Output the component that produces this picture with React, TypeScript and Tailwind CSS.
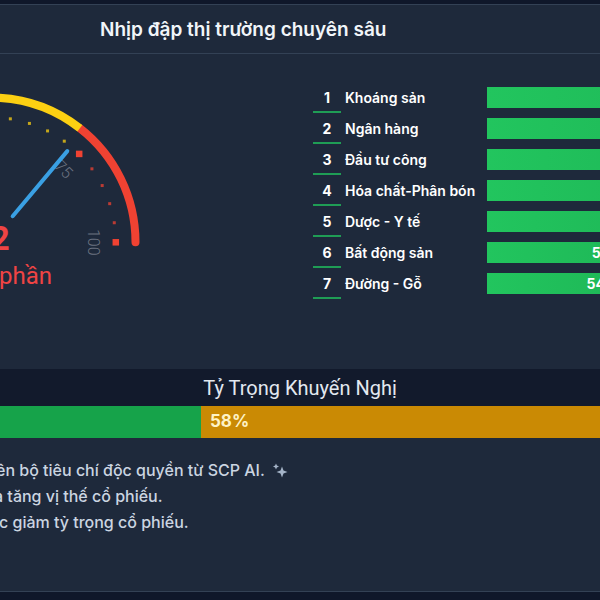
import React from "react";

const CX = -9.2;
const CY = 242.3;

function pt(a: number, r: number): [number, number] {
  const t = (a * Math.PI) / 180;
  return [CX + r * Math.cos(t), CY - r * Math.sin(t)];
}

function arc(a1: number, a2: number, r: number) {
  const [x1, y1] = pt(a1, r);
  const [x2, y2] = pt(a2, r);
  return `M${x1} ${y1} A${r} ${r} 0 ${a1 - a2 > 180 ? 1 : 0} 1 ${x2} ${y2}`;
}

function colorFor(a: number) {
  if (a <= 52) return "#f04232";
  if (a <= 126) return "#fcd012";
  return "#22c55e";
}

function Gauge() {
  const R = 144.7;
  const ticks = [] as React.ReactNode[];
  for (let i = 0; i <= 20; i++) {
    const a = 180 - i * 9;
    const major = i % 5 === 0;
    const [x, y] = pt(a, 125);
    const s = major ? 6.5 : 3;
    ticks.push(
      <rect
        key={i}
        x={x - s / 2}
        y={y - s / 2}
        width={s}
        height={s}
        fill={colorFor(a)}
        opacity={major ? 1 : 0.75}
      />
    );
  }
  const labels = [0, 25, 50, 75, 100].map((v) => {
    const a = 180 - v * 1.8;
    const [x, y] = pt(a, 103);
    return (
      <text
        key={v}
        x={x}
        y={y}
        fill="#6b7280"
        fontSize={16}
        fontFamily="Roboto, sans-serif"
        fontWeight={300}
        textAnchor="middle"
        dominantBaseline="central"
        transform={`rotate(${90 - a} ${x} ${y})`}
      >
        {v}
      </text>
    );
  });
  const [n1x, n1y] = pt(50, 34);
  const [n2x, n2y] = pt(50, 119);
  return (
    <svg width={312} height={315} viewBox="0 54 312 315" className="flex-none block">
      <path d={arc(180, 126, R)} stroke="#22c55e" strokeWidth={8} fill="none" strokeLinecap="round" />
      <path d={arc(52, 0, R)} stroke="#f04232" strokeWidth={8} fill="none" strokeLinecap="round" />
      <path d={arc(126, 52, R)} stroke="#fcd012" strokeWidth={8} fill="none" />
      {ticks}
      {labels}
      <line x1={n1x} y1={n1y} x2={n2x} y2={n2y} stroke="#3aa0e4" strokeWidth={4} strokeLinecap="round" />
      <text
        x={CX}
        y={250}
        fill="#ef4444"
        fontSize={33}
        fontWeight={700}
        fontFamily="Roboto, sans-serif"
        textAnchor="middle"
      >
        72
      </text>
      <text
        x={52}
        y={284}
        fill="#ef4444"
        fontSize={24}
        fontFamily="Roboto, sans-serif"
        textAnchor="end"
      >
        Tăng tỷ phần
      </text>
    </svg>
  );
}

const rows = [
  { n: 1, name: "Khoáng sản", w: 260, v: "78.4%" },
  { n: 2, name: "Ngân hàng", w: 240, v: "72.1%" },
  { n: 3, name: "Đầu tư công", w: 225, v: "68.9%" },
  { n: 4, name: "Hóa chất-Phân bón", w: 205, v: "64.3%" },
  { n: 5, name: "Dược - Y tế", w: 185, v: "60.7%" },
  { n: 6, name: "Bất động sản", w: 158, v: "55.8%" },
  { n: 7, name: "Đường - Gỗ", w: 153, v: "54.6%" },
];

function Sparkle() {
  return (
    <svg width="16" height="15" viewBox="0 0 16 15" className="inline-block ml-[7px] -mt-[2px] align-middle">
      <path d="M10 3.5 L11.5 7.5 L15.5 9 L11.5 10.5 L10 14.5 L8.5 10.5 L4.5 9 L8.5 7.5 Z" fill="#a5b4c8" />
      <path d="M4 0.5 L4.9 2.6 L7 3.5 L4.9 4.4 L4 6.5 L3.1 4.4 L1 3.5 L3.1 2.6 Z" fill="#a5b4c8" />
    </svg>
  );
}

export default function App() {
  return (
    <div className="w-[600px] h-[600px] overflow-hidden bg-[#0f172a] flex flex-col">
      <div className="h-[4px] flex-none" />
      <div className="flex-none h-[588px] bg-[#1e293b] border-t border-b border-[#334155] flex flex-col">
        <div className="flex-none h-[49px] border-b border-[#334155] flex items-center pl-[100px]">
          <h1 className="text-[19px] font-semibold text-[#f1f5f9] font-['Inter',sans-serif] leading-none">
            Nhịp đập thị trường chuyên sâu
          </h1>
        </div>
        <div className="flex-none h-[315px] flex">
          <Gauge />
          <div className="flex flex-col gap-[10px] pt-[33px] pl-[1px] font-['Inter',sans-serif]">
            {rows.map((r) => (
              <div key={r.n} className="flex items-start h-[21px]">
                <div className="flex-none w-[28px] h-[26px] border-b-2 border-[#1f9d55] flex items-center justify-center pb-[3px] text-[14px] font-bold text-white">
                  {r.n}
                </div>
                <div className="flex-none w-[146px] pl-[4px] leading-[21px] text-[14px] font-semibold text-white whitespace-nowrap">
                  {r.name}
                </div>
                <div
                  className="flex-none h-[21px] bg-gradient-to-r from-[#22c55e] to-[#1eb656] flex items-center justify-end pr-[8px] text-[14px] font-bold text-white"
                  style={{ width: r.w }}
                >
                  {r.v}
                </div>
              </div>
            ))}
          </div>
        </div>
        <div className="flex-none h-[37px] bg-[#121a2c] flex items-center justify-center">
          <span className="text-[20px] text-[#e2e8f0] font-['Roboto',sans-serif]">Tỷ Trọng Khuyến Nghị</span>
        </div>
        <div className="flex-none h-[32px] flex">
          <div className="w-[201px] bg-[#16a34a]" />
          <div className="flex-1 bg-[#ca8a04] flex items-center pl-[9px] text-[17px] font-bold text-[#fef3c7] font-['Inter',sans-serif]">
            58%
          </div>
        </div>
        <div className="flex-1 pt-[19px] text-[16px] font-medium leading-[26px] text-[#cbd5e1] font-['Inter',sans-serif] whitespace-nowrap">
          <div className="ml-[-4px]">
            ên bộ tiêu chí độc quyền từ SCP AI.
            <Sparkle />
          </div>
          <div className="ml-[-6px]">a tăng vị thế cổ phiếu.</div>
          <div className="ml-[-1px]">c giảm tỷ trọng cổ phiếu.</div>
        </div>
      </div>
    </div>
  );
}
